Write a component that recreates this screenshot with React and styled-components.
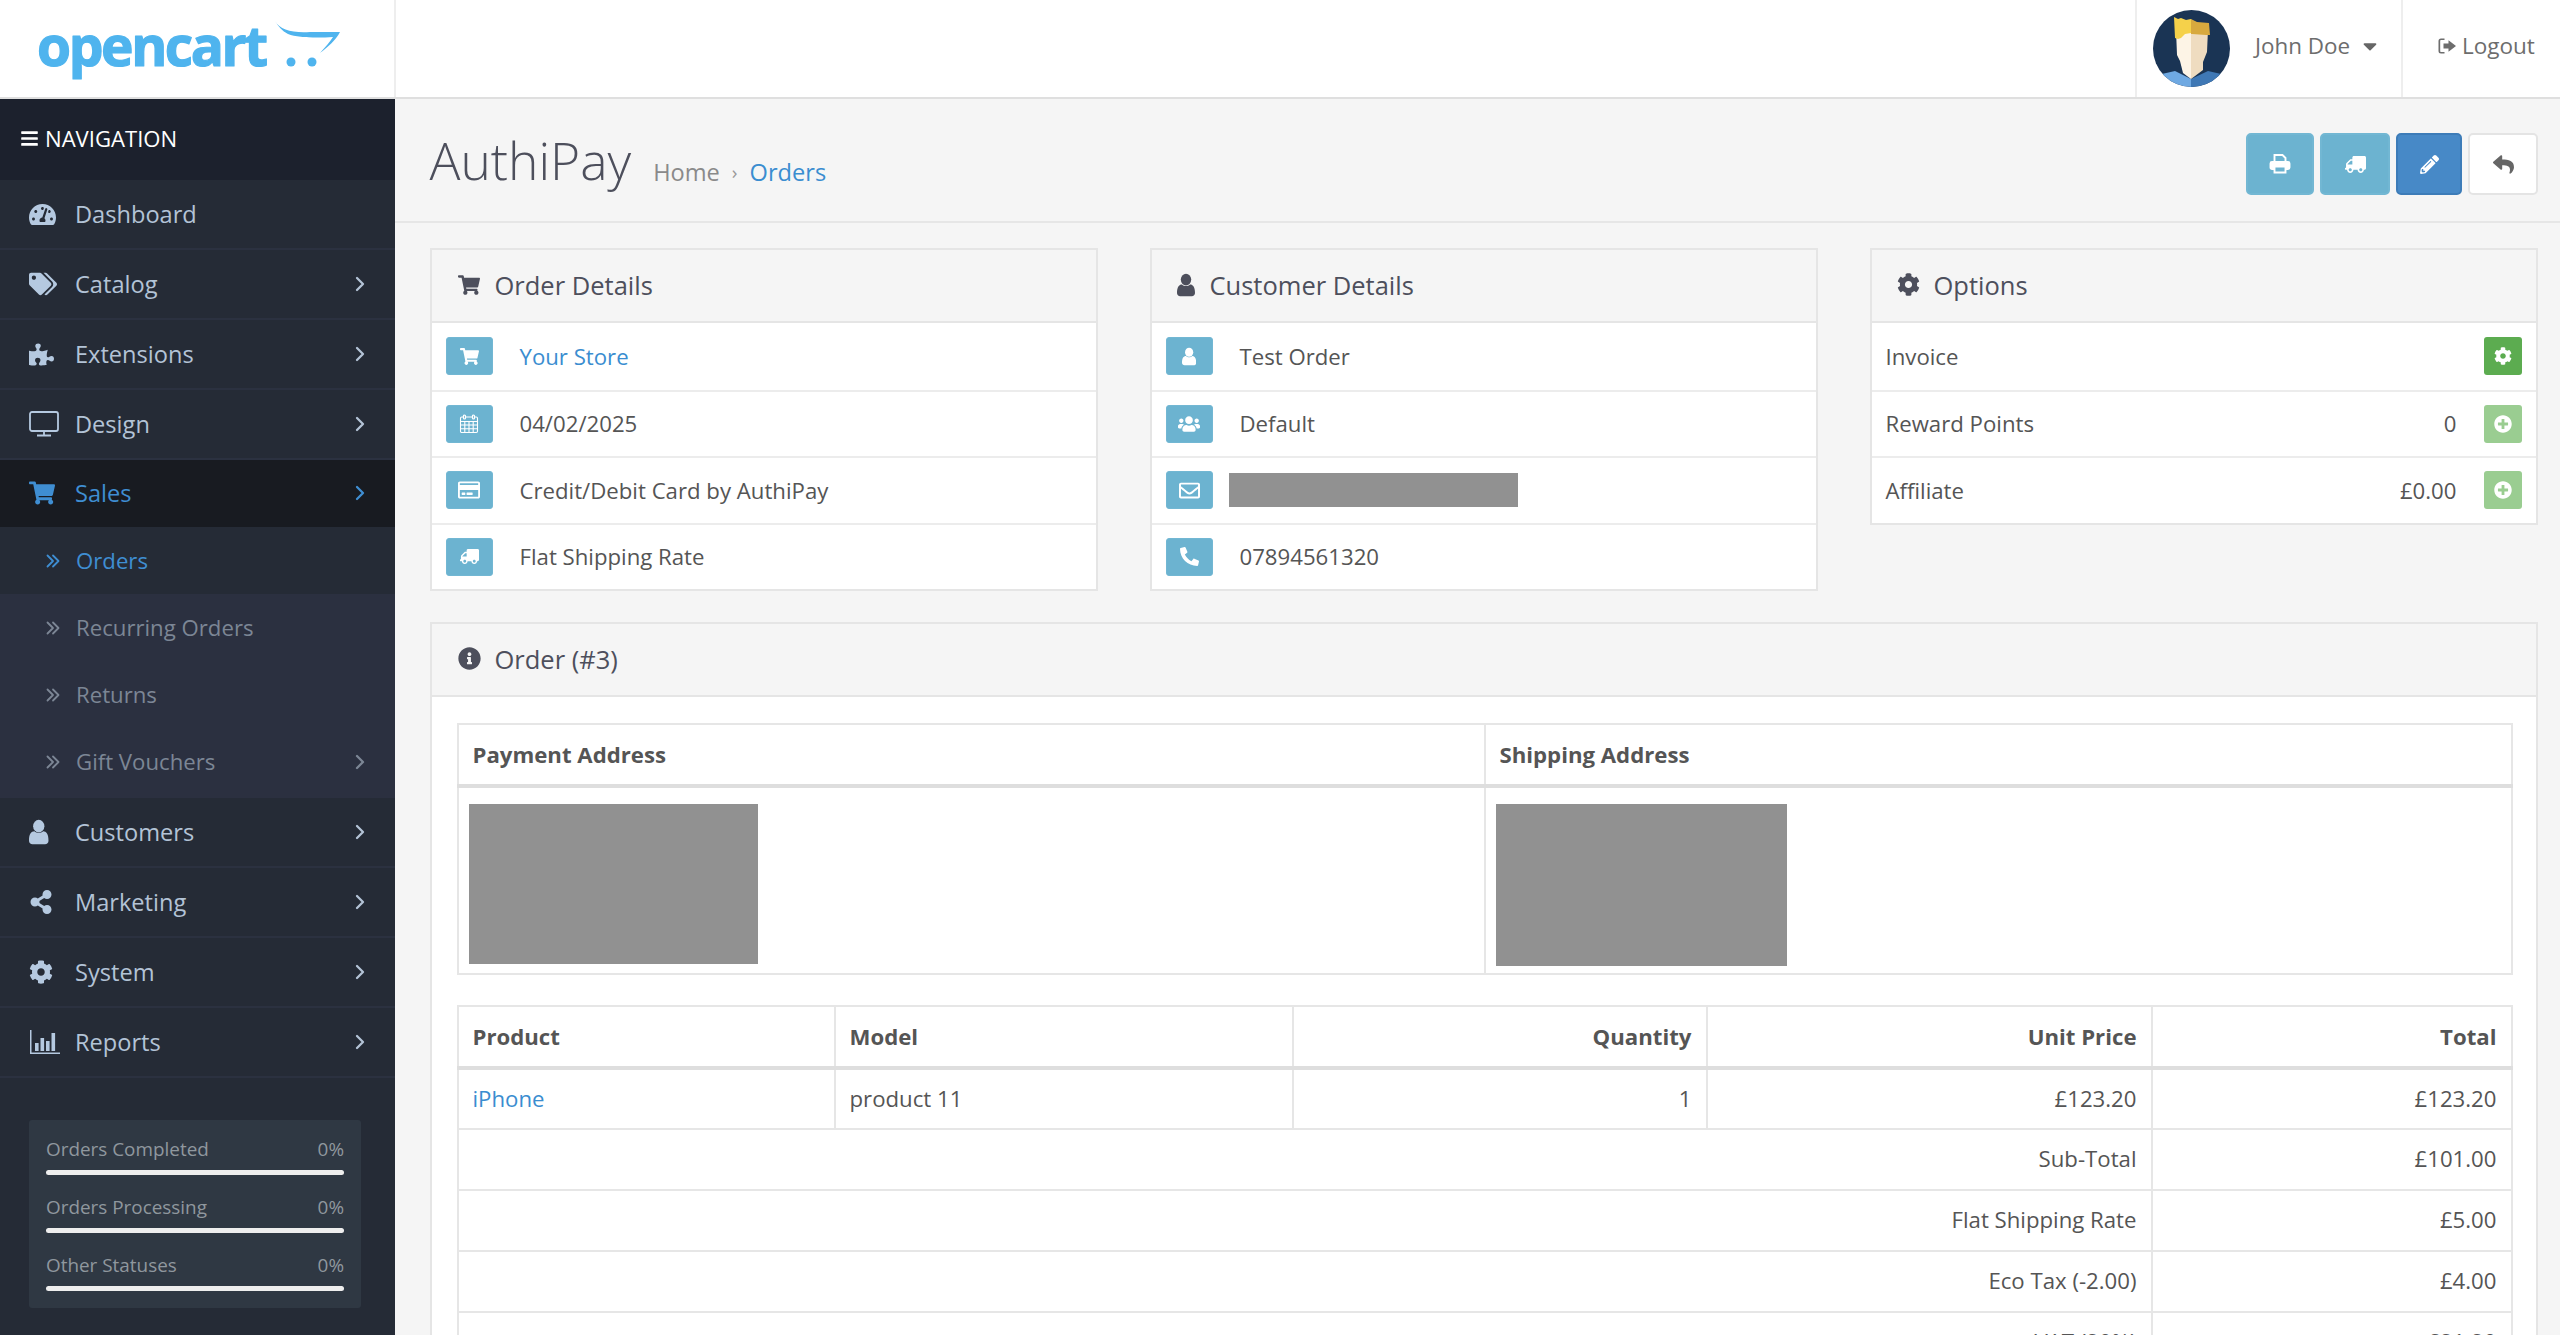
import React from "react";
import styled, { createGlobalStyle } from "styled-components";
import {
  FaTachometerAlt, FaTags, FaPuzzlePiece, FaShoppingCart, FaShareAlt, FaCog,
  FaTruck, FaPencilAlt, FaReply, FaRegCreditCard, FaRegEnvelope, FaPhone,
  FaUsers, FaInfoCircle, FaPlusCircle, FaCaretDown, FaBars,
} from "react-icons/fa";

const Global = createGlobalStyle`
  html, body { margin: 0; padding: 0; height: 100%; overflow: hidden; background: #f5f5f5; }
  body { font-family: "Open Sans", "Liberation Sans", sans-serif; color: #555; font-size: 22.2px; }
  * { box-sizing: border-box; }
`;

/* ---------- drawn icons ---------- */
const UserGlyph = ({ size = 24 }) => (
  <svg width={size * 0.75} height={size} viewBox="3 0 18 24" fill="currentColor">
    <ellipse cx="12" cy="6.6" rx="5.2" ry="5.8" />
    <path d="M3 20c0-6 2-8.600 5-8.600 1 1 2.500 1.600 4 1.600s3-.6 4-1.600c3 0 5 2.600 5 8.600 0 2-1.400 3.200-3.200 3.200H6.200C4.400 23.200 3 22 3 20z" />
  </svg>
);
const DesktopGlyph = ({ size = 30 }) => (
  <svg width={size} height={size} viewBox="0 0 30 30" fill="none" stroke="currentColor" strokeWidth="1.800">
    <rect x="1" y="3" width="28" height="19" rx="2" />
    <path d="M15 22v4M8 26.500h14" />
  </svg>
);
const ChartGlyph = ({ size = 32 }) => (
  <svg width={size} height={size} viewBox="0 0 32 32" fill="currentColor">
    <path d="M1 4h1.500v22.500H31V28H1z" />
    <rect x="6" y="17" width="3.600" height="8" />
    <rect x="11.500" y="12" width="3.600" height="13" />
    <rect x="17" y="15" width="3.600" height="10" />
    <rect x="22.500" y="7" width="3.600" height="18" />
  </svg>
);
const CalendarGlyph = ({ size = 20 }) => (
  <svg width={size} height={size} viewBox="0 0 20 20" fill="none" stroke="currentColor" strokeWidth="1.100">
    <rect x="1.500" y="3" width="17" height="15.500" rx="1.200" />
    <path d="M1.500 7.500h17M1.500 11h17M1.500 14.700h17M5.800 7.500v11M10 7.500v11M14.200 7.500v11" />
    <rect x="4.500" y="1" width="2" height="4" rx="1" fill="#6cb3d0" strokeWidth="1.200" />
    <rect x="13.500" y="1" width="2" height="4" rx="1" fill="#6cb3d0" strokeWidth="1.200" />
  </svg>
);
const PrintGlyph = ({ size = 22 }) => (
  <svg width={size} height={size} viewBox="0 0 22 22" fill="none" stroke="currentColor" strokeWidth="1.900">
    <path d="M5.500 9V2h8l3 3v4" />
    <rect x="1.500" y="9" width="19" height="7" rx="1.500" fill="currentColor" />
    <path d="M5.500 13.500h11v6h-11z" fill="#6cb3d0" />
  </svg>
);
const LogoutGlyph = ({ size = 20 }) => (
  <svg width={size} height={size} viewBox="0 0 20 20" fill="currentColor">
    <path d="M7.500 2.500H4A2.500 2.500 0 0 0 1.500 5v10A2.500 2.500 0 0 0 4 17.500h3.500v-1.600H4.200c-.6 0-1-.4-1-1V5.100c0-.6.4-1 1-1h3.300z" />
    <path d="M11.500 4.200 19 10l-7.500 5.800V12.400H6.500V7.600h5z" />
  </svg>
);
const Chevron = () => (
  <svg width="10" height="16" viewBox="0 0 10 16" fill="none" stroke="currentColor" strokeWidth="2.300" strokeLinecap="round" strokeLinejoin="round">
    <path d="M2 2l6 6-6 6" />
  </svg>
);
const DoubleChevron = () => (
  <svg width="14" height="14" viewBox="0 0 14 14" fill="none" stroke="currentColor" strokeWidth="1.800" strokeLinecap="round" strokeLinejoin="round">
    <path d="M1.500 1.500L7 7l-5.500 5.500M7 1.500L12.500 7 7 12.500" />
  </svg>
);

/* ---------- header ---------- */
const Page = styled.div`
  width: 2560px;
  height: 1335px;
  overflow: hidden;
  display: flex;
  flex-direction: column;
`;
const Header = styled.header`
  height: 99px;
  flex: none;
  background: #fff;
  border-bottom: 2px solid #dfdfdf;
  display: flex;
  align-items: stretch;
`;
const LogoCell = styled.div`
  width: 396px;
  border-right: 2px solid #eee;
  display: flex;
  align-items: flex-start;
`;
const Spacer = styled.div`flex: 1;`;
const UserCell = styled.div`
  width: 268px;
  border-left: 2px solid #eee;
  border-right: 2px solid #eee;
  display: flex;
  align-items: center;
  padding-left: 16px;
  color: #6d6d6d;
  font-size: 22.4px;
`;
const UserName = styled.span`
  margin-left: 25px;
  padding-bottom: 6px;
  display: flex;
  align-items: center;
  gap: 9px;
`;
const CaretIcon = styled(FaCaretDown)`
  font-size: 22px;
  color: #666;
`;
const LogoutCell = styled.div`
  flex: none;
  width: 157px;
  display: flex;
  align-items: center;
  padding: 0 0 6px 34px;
  gap: 5px;
  color: #6d6d6d;
  font-size: 22.5px;
`;

/* ---------- sidebar ---------- */
const Body = styled.div`
  flex: 1;
  display: flex;
  min-height: 0;
`;
const Sidebar = styled.nav`
  width: 395px;
  flex: none;
  background: #252b36;
  display: flex;
  flex-direction: column;
`;
const NavTitle = styled.div`
  height: 81px;
  background: #1c212d;
  color: #fff;
  display: flex;
  align-items: center;
  padding: 0 0 3px 20px;
  gap: 6px;
  font-size: 22.1px;
`;
const NavItem = styled.div`
  height: ${p => (p.$active ? "67px" : "70px")};
  padding: 0 30px 0 29px;
  display: flex;
  align-items: center;
  font-size: 23.6px;
  color: ${p => (p.$active ? "#3f8ed2" : "#b3c3d6")};
  background: ${p => (p.$active ? "#181b21" : "transparent")};
  border-bottom: 2px solid ${p => (p.$active ? "#181b21" : "#2b3140")};
`;
const NavIcon = styled.span`
  width: 46px;
  flex: none;
  display: flex;
  align-items: center;
  color: ${p => (p.$active ? "#3f8ed2" : "#b5c9e0")};
`;
const Grow = styled.span`flex: 1;`;
const SubList = styled.div`
  padding-bottom: 3px;
  background: #2b3040;
`;
const SubItem = styled.div`
  height: 67px;
  display: flex;
  align-items: center;
  padding: 0 30px 0 46px;
  font-size: 22.2px;
  color: ${p => (p.$active ? "#3f8ed2" : "#7c8695")};
  background: ${p => (p.$active ? "#252b36" : "#2b3040")};
`;
const SubIcon = styled.span`
  width: 30px;
  flex: none;
  display: flex;
  align-items: center;
`;
const StatsBox = styled.div`
  margin: 42px 34px 0 29px;
  height: 188px;
  background: #2f3843;
  border-radius: 3px;
  padding: 15px 17px;
  display: flex;
  flex-direction: column;
  gap: 18.500px;
`;
const Stat = styled.div`
  display: flex;
  flex-direction: column;
  gap: 6.500px;
`;
const StatLabel = styled.div`
  display: flex;
  justify-content: space-between;
  font-size: 18.9px;
  line-height: 28px;
  color: #8f979e;
`;
const StatBar = styled.div`
  height: 5px;
  background: #eee;
  border-radius: 3px;
`;

/* ---------- main ---------- */
const Main = styled.main`
  flex: 1;
  min-width: 0;
  display: flex;
  flex-direction: column;
  background: #f5f5f5;
`;
const TitleBar = styled.div`
  height: 124px;
  flex: none;
  border-bottom: 2px solid #e6e6e6;
  display: flex;
  align-items: flex-start;
  padding: 34px 22px 0 34.500px;
`;
const Title = styled.h1`
  margin: -6px 0 0;
  font-size: 51.5px;
  font-weight: 300;
  line-height: 66px;
  color: #4d4f5c;
`;
const Crumbs = styled.div`
  margin-left: 22px;
  margin-top: 22px;
  font-size: 23.6px;
  line-height: 34px;
  color: #8a8a8a;
  display: flex;
  align-items: center;
  gap: 12px;
`;
const CrumbSep = styled.span`
  font-size: 19px;
  color: #999;
`;
const LinkText = styled.span`
  color: #3a8dd0;
`;
const Actions = styled.div`
  margin-left: auto;
  display: flex;
  gap: 6px;
`;
const ActionBtn = styled.div`
  width: ${p => p.$w || 68}px;
  height: 62px;
  border-radius: 5px;
  display: flex;
  align-items: center;
  justify-content: center;
  font-size: 21px;
  color: ${p => (p.$kind === "white" ? "#666" : "#fff")};
  background: ${p => ({ info: "#6cb3d0", primary: "#4789c7", white: "#fff" }[p.$kind])};
  border: 2px solid ${p => ({ info: "#72b7d3", primary: "#3d7cb8", white: "#e4e4e4" }[p.$kind])};
`;
const Content = styled.div`
  padding: 25px 22px 0 34.500px;
  display: flex;
  flex-direction: column;
  gap: 31px;
`;
const CardGrid = styled.div`
  display: grid;
  grid-template-columns: 668px 668px 668px;
  column-gap: 52px;
  align-items: start;
`;
const Card = styled.section`
  background: #fff;
  border: 2px solid #e5e5e5;
`;
const CardHead = styled.div`
  height: 73px;
  background: #f5f5f5;
  border-bottom: 2px solid #e5e5e5;
  display: flex;
  align-items: center;
  padding: 0 0 2px ${p => p.$pad || 26}px;
  gap: ${p => p.$gap || 15}px;
  font-size: 25.5px;
  color: #4d4f5c;
`;
const Row = styled.div`
  height: 66.500px;
  display: flex;
  align-items: center;
  padding: 0 14px;
  font-size: 22.2px;
  color: #555;
  border-top: ${p => (p.$first ? "none" : "2px solid #ececec")};
`;
const RowIcon = styled.div`
  width: 47px;
  height: 38px;
  flex: none;
  margin-right: ${p => p.$gap || 27}px;
  background: #6cb3d0;
  border: 1px solid #72b7d3;
  border-radius: 3px;
  color: #fff;
  display: flex;
  align-items: center;
  justify-content: center;
  font-size: 19px;
`;
const Redact = styled.div`
  width: ${p => p.$w}px;
  height: ${p => p.$h}px;
  background: #919191;
`;
const RowValue = styled.span`
  margin-left: auto;
  margin-right: ${p => (p.$pad ? "27px" : 0)};
`;
const OptBtn = styled.div`
  width: 38px;
  height: 38px;
  flex: none;
  margin-left: ${p => (p.$auto ? "auto" : 0)};
  border-radius: 3px;
  color: #fff;
  display: flex;
  align-items: center;
  justify-content: center;
  font-size: 18px;
  background: ${p => (p.$faded ? "#9acd91" : "#5cac50")};
`;
const OrderBody = styled.div`
  padding: 26px 25px 0;
  display: flex;
  flex-direction: column;
  gap: 30px;
`;
const Table = styled.table`
  width: 2054px;
  table-layout: fixed;
  border-collapse: collapse;
  font-size: 22.2px;
  color: #555;
`;
const Th = styled.th`
  height: 62px;
  padding: 0 14px 1px;
  font-weight: 700;
  text-align: ${p => p.$align || "left"};
  border: 2px solid #e6e6e6;
  border-bottom: 4px solid #dedede;
`;
const Td = styled.td`
  height: 61px;
  padding: 0 14px 2px;
  text-align: ${p => p.$align || "left"};
  border: 2px solid #e6e6e6;
`;
const AddressCell = styled.td`
  height: 188px;
  padding: 16px 10px 0;
  vertical-align: top;
  border: 2px solid #e6e6e6;
`;

/* ---------- brand ---------- */
const Logo = () => (
  <svg width="360" height="90" viewBox="0 0 360 90">
    <text
      x="37"
      y="66"
      fontFamily="Open Sans, sans-serif"
      fontWeight="700"
      fontSize="55"
      fill="#4fb4ee"
      stroke="#4fb4ee"
      strokeWidth="1.200"
      strokeLinejoin="round"
      textLength="231"
      lengthAdjust="spacing"
    >
      opencart
    </text>
    <path d="M275 21C280 30 292 33 310 32L340 32C336 40 328 47 320 53C325 47 330 42 333 37C318 38 298 38 288 34C282 31 278 26 275 21z" fill="#4fb4ee" />
    <circle cx="291" cy="62" r="4.500" fill="#4fb4ee" />
    <circle cx="312" cy="62" r="4.500" fill="#4fb4ee" />
  </svg>
);
const Avatar = () => (
  <svg width="77" height="77" viewBox="0 0 77 77">
    <defs>
      <clipPath id="av">
        <circle cx="38.500" cy="38.500" r="38.500" />
      </clipPath>
    </defs>
    <g clipPath="url(#av)">
      <rect width="77" height="77" fill="#1a3454" />
      <path d="M0 77V66l22-5 16 8v8z" fill="#6fa9e2" />
      <path d="M77 77V66l-22-5-17 8v8z" fill="#3f78b5" />
      <path d="M23 20h15v49l-8-6-3-12-3-6z" fill="#fdf4e6" />
      <path d="M38 20h17l-1 22-4 10v8l-12 9z" fill="#efdcc0" />
      <path d="M21 7l4 2 3-1 5 2 5-1v14l-6 1-4 4-3 1-3-1z" fill="#f5d14a" />
      <path d="M38 9l6 3 12 1 1 12-4 0-14-1-1 0z" fill="#d8a93e" />
    </g>
  </svg>
);

const nav = [
  ["Dashboard", <FaTachometerAlt size={27} />, false],
  ["Catalog", <FaTags size={28} />, true],
  ["Extensions", <FaPuzzlePiece size={25} />, true],
  ["Design", <DesktopGlyph />, true],
];
const nav2 = [
  ["Customers", <UserGlyph size={26} />],
  ["Marketing", <FaShareAlt size={24} />],
  ["System", <FaCog size={24} />],
  ["Reports", <ChartGlyph />],
];
const sub = [
  ["Orders", true, false],
  ["Recurring Orders", false, false],
  ["Returns", false, false],
  ["Gift Vouchers", false, true],
];
const stats = ["Orders Completed", "Orders Processing", "Other Statuses"];
const totals = [
  ["Sub-Total", "£101.00"],
  ["Flat Shipping Rate", "£5.00"],
  ["Eco Tax (-2.00)", "£4.00"],
  ["VAT (20%)", "£21.20"],
];

export default function App() {
  return (
    <Page>
      <Global />
      <Header>
        <LogoCell><Logo /></LogoCell>
        <Spacer />
        <UserCell>
          <Avatar />
          <UserName>John Doe <CaretIcon /></UserName>
        </UserCell>
        <LogoutCell><LogoutGlyph /> Logout</LogoutCell>
      </Header>
      <Body>
        <Sidebar>
          <NavTitle><FaBars size={19} /> NAVIGATION</NavTitle>
          {nav.map(([t, ic, arrow]) => (
            <NavItem key={t}>
              <NavIcon>{ic}</NavIcon>{t}<Grow />{arrow && <Chevron />}
            </NavItem>
          ))}
          <NavItem $active>
            <NavIcon $active><FaShoppingCart size={26} /></NavIcon>
            Sales<Grow /><Chevron />
          </NavItem>
          <SubList>
            {sub.map(([t, active, arrow]) => (
              <SubItem key={t} $active={active}>
                <SubIcon><DoubleChevron /></SubIcon>{t}<Grow />{arrow && <Chevron />}
              </SubItem>
            ))}
          </SubList>
          {nav2.map(([t, ic]) => (
            <NavItem key={t}>
              <NavIcon>{ic}</NavIcon>{t}<Grow /><Chevron />
            </NavItem>
          ))}
          <StatsBox>
            {stats.map(s => (
              <Stat key={s}>
                <StatLabel><span>{s}</span><span>0%</span></StatLabel>
                <StatBar />
              </Stat>
            ))}
          </StatsBox>
        </Sidebar>
        <Main>
          <TitleBar>
            <Title>AuthiPay</Title>
            <Crumbs>
              <span>Home</span><CrumbSep>›</CrumbSep><LinkText>Orders</LinkText>
            </Crumbs>
            <Actions>
              <ActionBtn $kind="info"><PrintGlyph /></ActionBtn>
              <ActionBtn $kind="info" $w={70}><FaTruck style={{ transform: "scaleX(-1)" }} /></ActionBtn>
              <ActionBtn $kind="primary" $w={66}><FaPencilAlt size={19} /></ActionBtn>
              <ActionBtn $kind="white" $w={70}><FaReply /></ActionBtn>
            </Actions>
          </TitleBar>
          <Content>
            <CardGrid>
              <Card>
                <CardHead><FaShoppingCart size={22} /> Order Details</CardHead>
                <Row $first><RowIcon><FaShoppingCart /></RowIcon><LinkText>Your Store</LinkText></Row>
                <Row><RowIcon><CalendarGlyph /></RowIcon>04/02/2025</Row>
                <Row><RowIcon><FaRegCreditCard size={22} /></RowIcon>Credit/Debit Card by AuthiPay</Row>
                <Row><RowIcon><FaTruck style={{ transform: "scaleX(-1)" }} /></RowIcon>Flat Shipping Rate</Row>
              </Card>
              <Card>
                <CardHead $pad={25} $gap={15}><UserGlyph size={24} /> Customer Details</CardHead>
                <Row $first><RowIcon><UserGlyph size={19} /></RowIcon>Test Order</Row>
                <Row><RowIcon><FaUsers size={22} /></RowIcon>Default</Row>
                <Row><RowIcon $gap={16}><FaRegEnvelope size={21} /></RowIcon><Redact $w={289} $h={34} /></Row>
                <Row><RowIcon><FaPhone style={{ transform: "scaleX(-1)" }} /></RowIcon>07894561320</Row>
              </Card>
              <Card>
                <CardHead $pad={25} $gap={14}><FaCog size={23} /> Options</CardHead>
                <Row $first>Invoice<OptBtn $auto><FaCog /></OptBtn></Row>
                <Row>Reward Points<RowValue $pad>0</RowValue><OptBtn $faded><FaPlusCircle /></OptBtn></Row>
                <Row>Affiliate<RowValue $pad>£0.00</RowValue><OptBtn $faded><FaPlusCircle /></OptBtn></Row>
              </Card>
            </CardGrid>
            <Card>
              <CardHead $gap={14}><FaInfoCircle size={23} /> Order (#3)</CardHead>
              <OrderBody>
                <Table>
                  <colgroup><col style={{ width: 1027 }} /><col style={{ width: 1027 }} /></colgroup>
                  <thead>
                    <tr><Th>Payment Address</Th><Th>Shipping Address</Th></tr>
                  </thead>
                  <tbody>
                    <tr>
                      <AddressCell><Redact $w={289} $h={160} /></AddressCell>
                      <AddressCell><Redact $w={291} $h={162} /></AddressCell>
                    </tr>
                  </tbody>
                </Table>
                <Table>
                  <colgroup>
                    <col style={{ width: 377 }} />
                    <col style={{ width: 458 }} />
                    <col style={{ width: 414 }} />
                    <col style={{ width: 445 }} />
                    <col style={{ width: 360 }} />
                  </colgroup>
                  <thead>
                    <tr>
                      <Th>Product</Th>
                      <Th>Model</Th>
                      <Th $align="right">Quantity</Th>
                      <Th $align="right">Unit Price</Th>
                      <Th $align="right">Total</Th>
                    </tr>
                  </thead>
                  <tbody>
                    <tr>
                      <Td><LinkText>iPhone</LinkText></Td>
                      <Td>product 11</Td>
                      <Td $align="right">1</Td>
                      <Td $align="right">£123.20</Td>
                      <Td $align="right">£123.20</Td>
                    </tr>
                    {totals.map(([l, v]) => (
                      <tr key={l}>
                        <Td colSpan={4} $align="right">{l}</Td>
                        <Td $align="right">{v}</Td>
                      </tr>
                    ))}
                  </tbody>
                </Table>
              </OrderBody>
            </Card>
          </Content>
        </Main>
      </Body>
    </Page>
  );
}
